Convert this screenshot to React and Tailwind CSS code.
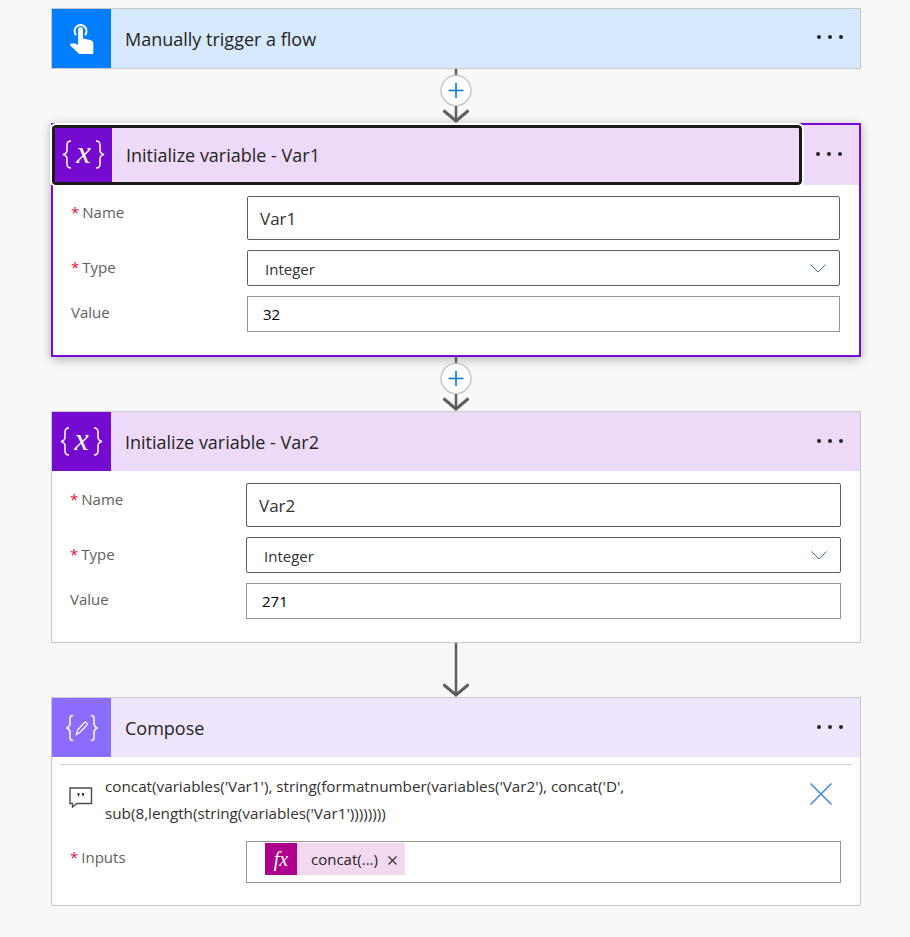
import React from "react";

const Dots = () => (
  <div className="flex gap-[7px] mr-[17px] shrink-0">
    <span className="w-[4px] h-[4px] rounded-full bg-[#252423]" />
    <span className="w-[4px] h-[4px] rounded-full bg-[#252423]" />
    <span className="w-[4px] h-[4px] rounded-full bg-[#252423]" />
  </div>
);

const TouchIcon = () => (
  <svg className="ml-[1px] mb-[1px]" width="27" height="37" viewBox="0 0 28 34" fill="none">
    <path d="M7.5 13.5a6.2 6.2 0 1 1 9 0" stroke="#fff" strokeWidth="2" />
    <path
      d="M9.5 7.5a2.5 2.5 0 0 1 5 0v9.5l7.5 1.6c2 .4 3.200 1.700 3.200 3.700V33H10.500L1.500 24.500c-.8-.8-.3-2 .8-2.200 2-.3 4.500-.1 7.200 1.200z"
      fill="#fff"
    />
  </svg>
);

const Brace = ({ flip }) => (
  <svg className={flip ? "-scale-x-100" : ""} width="10" height="29" viewBox="0 0 10 29" fill="none">
    <path d="M9 1C6 1 5 2.500 5 5v5c0 2.500-1 3.800-4 4.500C4 15.200 5 16.500 5 19v5c0 2.500 1 4 4 4" stroke="#fff" strokeWidth="1.500" />
  </svg>
);

const VariableIcon = () => (
  <div className="flex items-center text-white font-['Liberation_Serif',serif] leading-none">
    <Brace />
    <span className="text-[32px] italic mx-[4px] mb-[5px]">x</span>
    <Brace flip />
  </div>
);

const ComposeIcon = () => (
  <svg width="32" height="28" viewBox="0 0 32 28" fill="none" stroke="#fff" strokeWidth="1.5">
    <path d="M7 1.500c-2.500 0-3 1-3 3v5c0 2-1 3.500-3 4.500 2 1 3 2.500 3 4.500v5c0 2 .5 3 3 3" />
    <path d="M25 1.500c2.500 0 3 1 3 3v5c0 2 1 3.500 3 4.500-2 1-3 2.500-3 4.500v5c0 2-.5 3-3 3" />
    <path d="M10.500 20.500l1-4.500 7-7.500c1-1 3.500 1 2.500 2.500l-7 7.200z" strokeWidth="1.200" />
  </svg>
);

const CommentIcon = () => (
  <svg width="24" height="21" viewBox="0 0 24 21" fill="none">
    <path d="M1 1h21.500v15.500H8L3.500 20v-3.500H1z" stroke="#4a4a4a" strokeWidth="1.400" />
    <path d="M8.500 6h2v2.200l-.7 1.300h-.9l.5-1.500h-.9zM13 6h2v2.200l-.7 1.300h-.9l.5-1.500H13z" fill="#333" />
  </svg>
);

const Connector = ({ plus }) => (
  <div className="flex justify-center h-[54px]">
    <svg width="40" height="54" viewBox="0 0 40 54" fill="none">
      <path d="M20 0v52" stroke="#605e5c" strokeWidth="2.500" />
      <path d="M7.500 41.500L20 52 32.500 41.500" stroke="#605e5c" strokeWidth="3" />
      {plus && (
        <>
          <circle cx="20" cy="21.500" r="15" fill="#fff" stroke="#c8c8c8" strokeWidth="1.500" />
          <path d="M20 14v15M12.500 21.500h15" stroke="#0078d4" strokeWidth="1.600" />
        </>
      )}
    </svg>
  </div>
);

const VariableFields = ({ name, value }) => (
  <div className="flex flex-col gap-[10px]">
    <div className="flex">
      <div className="w-[176px] shrink-0 text-[15px] text-[#605e5c] leading-[20px] pt-[6px]">
        <span className="text-[#e0103a] mr-[3px]">*</span>
        Name
      </div>
      <div className="flex-1 h-[44px] border border-[#605e5c] rounded-[2px] flex items-center pl-[12px] pt-[2px] text-[17px] text-[#323130]">
        {name}
      </div>
    </div>
    <div className="flex">
      <div className="w-[176px] shrink-0 text-[15px] text-[#605e5c] leading-[20px] pt-[7px]">
        <span className="text-[#e0103a] mr-[3px]">*</span>
        Type
      </div>
      <div className="flex-1 h-[36px] border border-[#605e5c] rounded-[2px] flex items-center justify-between pl-[17px] pr-[13px] text-[15px] text-[#323130]">
        <span className="pt-[2px]">Integer</span>
        <svg width="16" height="9" viewBox="0 0 16 9" fill="none">
          <path d="M.5.500L8 8 15.500.500" stroke="#3a6f8f" strokeWidth="1" />
        </svg>
      </div>
    </div>
    <div className="flex">
      <div className="w-[176px] shrink-0 text-[15px] text-[#605e5c] leading-[20px] pt-[6px]">Value</div>
      <div className="flex-1 h-[36px] border border-[#979593] flex items-center pl-[15px] pt-[1px] text-[15px] text-black">
        {value}
      </div>
    </div>
  </div>
);

export default function App() {
  return (
    <div className="w-[910px] h-[937px] bg-[#f8f8f8] pt-[8px] pl-[51px] pr-[49px] font-['Open_Sans',sans-serif] overflow-hidden">
      {/* Trigger */}
      <div className="h-[61px] border border-[#c8c8c8] bg-[#d7e9fe] flex items-center">
        <div className="w-[59px] h-full bg-[#007eff] flex items-center justify-center">
          <TouchIcon />
        </div>
        <div className="flex-1 pl-[14px] pt-[1px] text-[18px] text-[#252423]">Manually trigger a flow</div>
        <div className="mb-[3px]">
          <Dots />
        </div>
      </div>

      <Connector plus />

      {/* Var1, selected */}
      <div className="h-[234px] border-2 border-[#7808d3] bg-white shadow-[0_2px_10px_rgba(0,0,0,0.3)]">
        <div className="flex items-center h-[60px] bg-[#ecdaf8] relative">
          <div className="flex h-[60px] w-[750px] items-center border-[3px] border-[#1b1a19] rounded-[4px] outline-2 outline-white -ml-[1px] -mt-[1px] overflow-hidden">
            <div className="w-[57px] h-full bg-[#750bd0] flex items-center justify-center">
              <VariableIcon />
            </div>
            <div className="pl-[14px] pt-[1px] text-[18px] text-[#252423]">Initialize variable - Var1</div>
          </div>
          <div className="ml-auto mb-[2px]">
            <Dots />
          </div>
        </div>
        <div className="pl-[18px] pr-[19px] pt-[11px]">
          <VariableFields name="Var1" value="32" />
        </div>
      </div>

      <Connector plus />

      {/* Var2 */}
      <div className="h-[232px] border border-[#c8c8c8] bg-white">
        <div className="flex items-center h-[59px] bg-[#ecdaf8]">
          <div className="w-[59px] h-full bg-[#750bd0] flex items-center justify-center">
            <VariableIcon />
          </div>
          <div className="flex-1 pl-[14px] pt-[1px] text-[18px] text-[#252423]">Initialize variable - Var2</div>
          <div className="mb-[1px]">
            <Dots />
          </div>
        </div>
        <div className="pl-[18px] pr-[19px] pt-[12px]">
          <VariableFields name="Var2" value="271" />
        </div>
      </div>

      <Connector />

      {/* Compose */}
      <div className="h-[209px] border border-[#c8c8c8] bg-white">
        <div className="flex items-center h-[59px] bg-[#ede6fe]">
          <div className="w-[59px] h-full bg-[#8c6cff] flex items-center justify-center">
            <ComposeIcon />
          </div>
          <div className="flex-1 pl-[14px] pt-[1px] text-[18px] text-[#252423]">Compose</div>
          <div className="mb-[1px]">
            <Dots />
          </div>
        </div>
        <div className="mx-[7px] mt-[7px] border-t border-[#d2d0ce] h-[77px] flex pt-[8px]">
          <div className="w-[46px] shrink-0 pl-[10px] pt-[14px]">
            <CommentIcon />
          </div>
          <div className="text-[15.25px] leading-[27px] text-[#323130]">
            concat(variables('Var1'), string(formatnumber(variables('Var2'), concat('D',
            <br />
            sub(8,length(string(variables('Var1'))))))))
          </div>
          <div className="ml-auto mr-[20px] pt-[9px]">
            <svg width="24" height="24" viewBox="0 0 24 24" fill="none">
              <path d="M1.500 1.500l21 21M22.500 1.500l-21 21" stroke="#2f7fe8" strokeWidth="1.300" />
            </svg>
          </div>
        </div>
        <div className="flex pl-[18px] pr-[19px]">
          <div className="w-[176px] shrink-0 text-[15px] text-[#605e5c] leading-[20px] pt-[6px]">
            <span className="text-[#e0103a] mr-[3px]">*</span>
            Inputs
          </div>
          <div className="flex-1 h-[42px] border border-[#979593] flex items-start pt-[1px] pl-[18px]">
            <div className="flex items-center h-[32px] bg-[#f3d9ef]">
              <div className="w-[32px] h-full bg-[#ad008c] flex items-center justify-center text-white italic font-['Liberation_Serif',serif] text-[20px]">
                fx
              </div>
              <span className="pl-[14px] text-[15px] text-[#252423]">concat(...)</span>
              <svg className="ml-[10px] mr-[8px] mt-[3px]" width="9" height="9" viewBox="0 0 9 9" fill="none">
                <path d="M.5.500l8 8M8.500.500l-8 8" stroke="#333" strokeWidth="1.200" />
              </svg>
            </div>
          </div>
        </div>
      </div>
    </div>
  );
}
